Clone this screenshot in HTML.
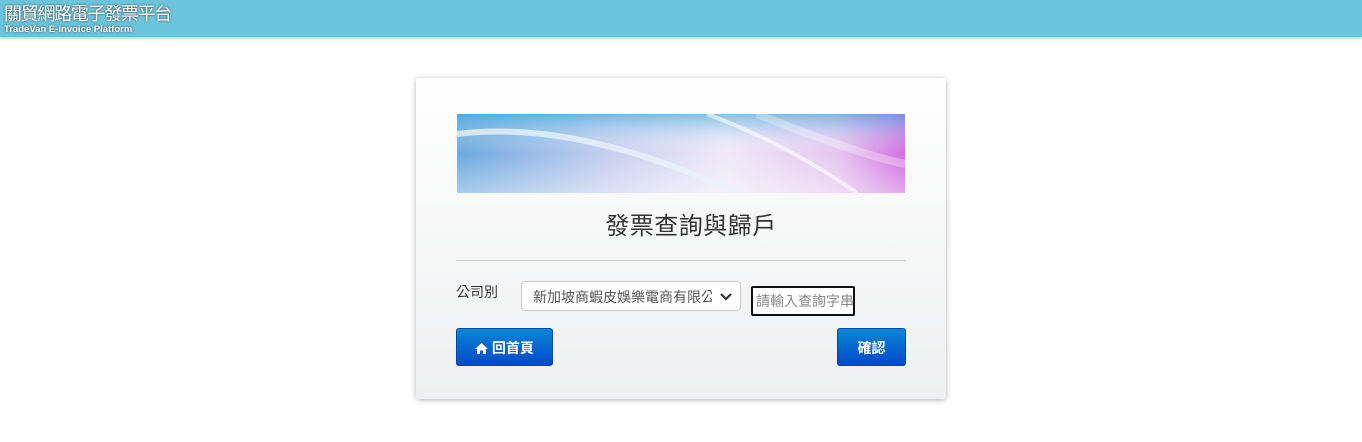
<!DOCTYPE html>
<html><head><meta charset="utf-8"><style>
body{margin:0;width:1362px;height:442px;background:#fff;font-family:"Liberation Sans","Noto Sans CJK TC",sans-serif;position:relative;overflow:hidden}
.top{position:absolute;left:0;top:0;width:1362px;height:37px;background:#6ac4db;box-shadow:0 1px 3px rgba(0,0,0,.3)}
.t1{position:absolute;left:4px;top:4px;color:#fff;font-size:18px;line-height:20px;text-shadow:0 0 2px #333;letter-spacing:-1.3px}
.t2{position:absolute;left:4px;top:24px;color:#fff;font-size:9.5px;font-weight:bold;line-height:12px;text-shadow:0 0 2px #333}
.card{position:absolute;left:416px;top:78px;width:530px;height:321px;background:linear-gradient(#fff,#eeeff0);border-radius:3px;box-shadow:0 1px 6px rgba(0,0,0,.3)}
.ban{position:absolute;left:41px;top:36px;width:448px;height:79px}
.title{position:absolute;left:10px;width:530px;top:128px;text-align:center;font-size:24px;color:#333;letter-spacing:.5px}
.hr{position:absolute;left:40px;top:182px;width:450px;border-top:1px solid #ccc}
.lab{position:absolute;left:40px;top:204px;font-size:14px;color:#333}
.sel{position:absolute;left:105px;top:203px;width:220px;height:30px;border:1px solid #ccc;border-radius:4px;background:#fff;font-size:14px;color:#555;line-height:30px;padding-left:11px;box-sizing:border-box;overflow:hidden;white-space:nowrap}
.sel svg{position:absolute;right:0;top:0;background:#fff;padding:0 4px}
.inp{position:absolute;left:335px;top:208px;width:104px;height:30px;border:2px solid #111;border-radius:2px;box-sizing:border-box;font-size:14px;color:#888;line-height:26px;padding-left:3px;background:#fff;white-space:nowrap;overflow:hidden}
.btn{position:absolute;top:250px;height:38px;border-radius:3px;background:linear-gradient(#0a86d6,#0249c8);color:#fff;font-weight:bold;font-size:14px;line-height:38px;text-align:center;border:1px solid #0348a8;box-sizing:border-box}
</style></head><body>
<div class="top"><div class="t1">關貿網路電子發票平台</div><div class="t2">TradeVan E-invoice Platform</div></div>
<div class="card">
<svg class="ban" viewBox="0 0 448 79" preserveAspectRatio="none">
<defs>
<linearGradient id="g" x1="0" y1="0" x2="1" y2="0"><stop offset="0" stop-color="#6ba8de"/><stop offset=".35" stop-color="#c9d0f0"/><stop offset=".6" stop-color="#efe9f8"/><stop offset=".85" stop-color="#e6c6ef"/><stop offset="1" stop-color="#cf6fe0"/></linearGradient>
<linearGradient id="v" x1="0" y1="0" x2="0" y2="1"><stop offset="0" stop-color="#3aa9e0" stop-opacity=".6"/><stop offset=".5" stop-color="#fff" stop-opacity="0"/><stop offset="1" stop-color="#fff" stop-opacity=".4"/></linearGradient>
</defs>
<rect width="448" height="79" fill="url(#g)"/>
<rect width="448" height="79" fill="url(#v)"/>
<path d="M0 20 Q120 5 280 79" stroke="#e8f2fb" stroke-width="6" fill="none" opacity=".8"/>
<path d="M250 0 Q330 30 400 79" stroke="#fff" stroke-width="4" fill="none" opacity=".6"/>
<path d="M300 0 Q400 40 448 50" stroke="#fff" stroke-width="8" fill="none" opacity=".3"/>
</svg>
<div class="title">發票查詢與歸戶</div>
<div class="hr"></div>
<div class="lab">公司別</div>
<div class="sel">新加坡商蝦皮娛樂電商有限公司<svg width="20" height="28" viewBox="0 0 20 28"><path d="M5 12 L10 17 L15 12" stroke="#333" stroke-width="2.2" fill="none"/></svg></div>
<div class="inp">請輸入查詢字串</div>
<div class="btn" style="left:40px;width:97px"><svg width="13" height="11" viewBox="0 0 13 11" style="vertical-align:-1px"><path d="M6.5 0 L13 6 L11 6 L11 11 L8 11 L8 7.5 L5 7.5 L5 11 L2 11 L2 6 L0 6 Z" fill="#fff"/></svg> 回首頁</div>
<div class="btn" style="left:421px;width:69px">確認</div>
</div>
</body></html>
